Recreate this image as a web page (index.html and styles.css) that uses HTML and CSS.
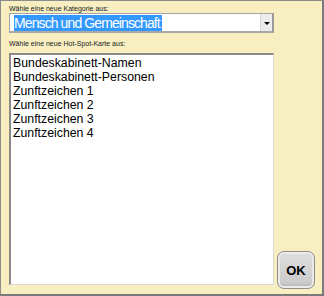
FILE: index.html
```html
<!DOCTYPE html>
<html>
<head>
  <title>Hot-Spot-Karte wählen</title>
  <link rel="stylesheet" href="styles.css">
</head>
<body>

  <div class="dialog">
    <div class="caption">Wähle eine neue Kategorie aus:</div>
    <div class="combo">
      <span class="combo-value">Mensch und Gemeinschaft</span>
      <span class="combo-arrow"></span>
    </div>

    <div class="caption caption-list">Wähle eine neue Hot-Spot-Karte aus:</div>
    <div class="list-row">
      <ul class="listbox">
        <li>Bundeskabinett-Namen</li>
        <li>Bundeskabinett-Personen</li>
        <li>Zunftzeichen 1</li>
        <li>Zunftzeichen 2</li>
        <li>Zunftzeichen 3</li>
        <li>Zunftzeichen 4</li>
      </ul>
      <button class="ok-button">OK</button>
    </div>
  </div>

</body>
</html>
```

FILE: styles.css
```css
html, body {
  margin: 0;
  padding: 0;
}
body {
  font-family: "Liberation Sans", Arial, sans-serif;
  color: #000;
}
.dialog {
  width: 324px;
  height: 296px;
  box-sizing: border-box;
  display: flex;
  flex-direction: column;
  padding: 4px 0 5px 8px;
  background: #f7efc2;
  border-style: solid;
  border-color: #8c8c8c #7a7a7a #7a7a7a #8c8c8c;
  border-width: 1px 2px 2px 1px;
}
.caption {
  font-size: 7px;
  line-height: 8px;
  height: 8px;
  color: #1a1a1a;
  white-space: nowrap;
}
.caption-list {
  margin-top: 7px;
  margin-bottom: 5px;
}
.combo {
  width: 265px;
  height: 20px;
  box-sizing: border-box;
  display: flex;
  align-items: center;
  background: white;
  border: 1px solid #a5a5a5;
  border-right: 2px solid #9a9a9a;
  border-bottom: 2px solid #a8a8a8;
  padding-left: 4px;
}
.combo-value {
  background: #3399ff;
  color: white;
  font-size: 14px;
  line-height: 16px;
  letter-spacing: -0.9px;
  padding-right: 2px;
  white-space: nowrap;
}
.combo-arrow {
  margin-left: auto;
  width: 11px;
  height: 100%;
  background: #ececec;
  border-left: 1px solid #d8d8d8;
  display: flex;
  align-items: center;
  justify-content: center;
}
.combo-arrow::after {
  content: "";
  border-left: 3px solid transparent;
  border-right: 3px solid transparent;
  border-top: 3px solid #000;
  margin-top: 1px;
}
.list-row {
  flex: 1;
  display: flex;
  align-items: flex-end;
}
.listbox {
  list-style: none;
  margin: 0 0 4px 0;
  padding: 1px 0 0 2px;
  width: 265px;
  height: 232px;
  box-sizing: border-box;
  background: white;
  border-style: solid;
  border-width: 2px 1px 1px 2px;
  border-color: #8a8a8a #dadada #dadada #8a8a8a;
  font-size: 12.3px;
  line-height: 14px;
}
.listbox li {
  white-space: nowrap;
}
.ok-button {
  width: 38px;
  height: 38px;
  margin-left: 3px;
  padding: 0;
  border: 1px solid #8f8f8f;
  border-radius: 7px;
  background: linear-gradient(#dedede, #c9c9c9);
  box-shadow: inset 0 0 0 2px #ebebeb, inset 0 -3px 3px rgba(0,0,0,0.12);
  font-family: "Liberation Sans", Arial, sans-serif;
  font-weight: bold;
  font-size: 13px;
  color: #000;
}
```
